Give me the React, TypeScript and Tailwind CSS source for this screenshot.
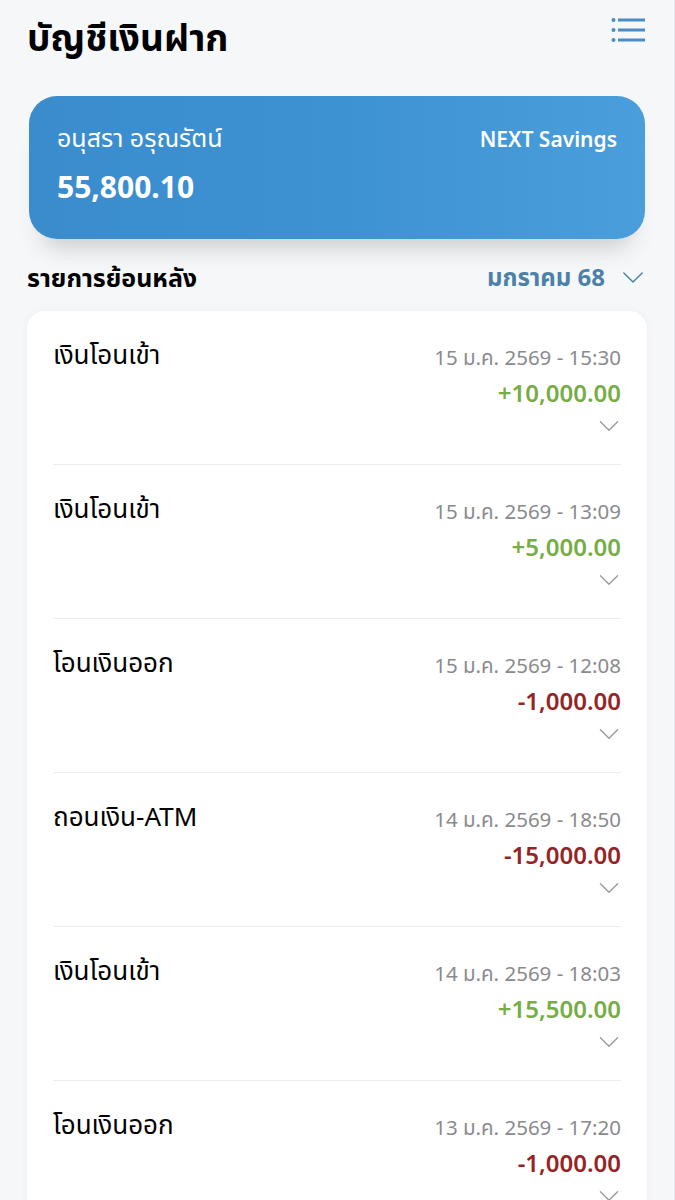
import React from "react";

const rows = [
  { t: "เงินโอนเข้า", d: "15 ม.ค. 2569 - 15:30", a: "+10,000.00", pos: true },
  { t: "เงินโอนเข้า", d: "15 ม.ค. 2569 - 13:09", a: "+5,000.00", pos: true },
  { t: "โอนเงินออก", d: "15 ม.ค. 2569 - 12:08", a: "-1,000.00", pos: false },
  { t: "ถอนเงิน-ATM", d: "14 ม.ค. 2569 - 18:50", a: "-15,000.00", pos: false },
  { t: "เงินโอนเข้า", d: "14 ม.ค. 2569 - 18:03", a: "+15,500.00", pos: true },
  { t: "โอนเงินออก", d: "13 ม.ค. 2569 - 17:20", a: "-1,000.00", pos: false },
];

const Chevron = ({ className }: { className?: string }) => (
  <svg viewBox="0 0 24 14" className={className} fill="none" stroke="currentColor" strokeWidth="1.6" strokeLinecap="round" strokeLinejoin="round">
    <path d="M2 2 L12 12 L22 2" />
  </svg>
);

export default function App() {
  return (
    <div
      className="w-[675px] h-[1200px] overflow-hidden bg-[#f6f7f9] border-r border-[#e4e5e8]"
      style={{ fontFamily: '"Noto Sans", "Noto Sans Thai", "Liberation Sans", sans-serif' }}
    >
      <div className="flex items-start justify-between pl-[27px] pr-[29px] pt-[12px]">
        <h1 className="text-[37px] font-bold text-black leading-[50px]">บัญชีเงินฝาก</h1>
        <svg width="34" height="26" viewBox="0 0 34 26" className="mt-[5px]">
          <circle cx="2.5" cy="3" r="2" fill="#4a8cc6" />
          <circle cx="2.5" cy="13" r="2" fill="#4a8cc6" />
          <circle cx="2.5" cy="23" r="2" fill="#4a8cc6" />
          <rect x="7" y="1.5" width="27" height="3" fill="#4a8cc6" />
          <rect x="7" y="11.5" width="27" height="3" fill="#4a8cc6" />
          <rect x="7" y="21.5" width="27" height="3" fill="#4a8cc6" />
        </svg>
      </div>

      <div className="mx-[29px] mt-[34px] h-[143px] rounded-[28px] bg-gradient-to-r from-[#3a8ccd] via-[#3d92d2] to-[#4a9edb] shadow-[0_22px_24px_-14px_rgba(0,0,0,0.18)] px-[28px] pt-[24px] flex justify-between">
        <div className="text-white">
          <div className="text-[25px] leading-[34px]">อนุสรา อรุณรัตน์</div>
          <div className="text-[30px] font-bold leading-[42px] mt-[12px]">55,800.10</div>
        </div>
        <div className="text-white text-[21px] font-semibold leading-[32px] mt-[3px]">NEXT Savings</div>
      </div>

      <div className="flex items-center justify-between pl-[27px] pr-[30px] mt-[20px]">
        <div className="text-[25px] font-bold text-black leading-[36px]">รายการย้อนหลัง</div>
        <div className="flex items-center gap-[17px]">
          <span className="text-[24px] font-bold text-[#4b81a8] leading-[36px]">มกราคม 68</span>
          <Chevron className="w-[22px] h-[13px] text-[#4b81a8]" />
        </div>
      </div>

      <div className="mx-[27px] mt-[16px] bg-white rounded-[18px] shadow-[0_0_10px_rgba(0,0,0,0.04)] px-[26px]">
        {rows.map((r, i) => (
          <div key={i} className="flex justify-between pt-[25px] h-[154px] border-b border-[#ececee]">
            <div className="text-[26px] text-black leading-[36px]">{r.t}</div>
            <div className="flex flex-col items-end">
              <div className="text-[20.5px] text-[#8a8a8e] leading-[34px] mt-[4px]">{r.d}</div>
              <div className={`text-[24px] font-semibold leading-[34px] mt-[2px] ${r.pos ? "text-[#76ad45]" : "text-[#962424]"}`}>{r.a}</div>
              <Chevron className="w-[22px] h-[12px] text-[#9a9a9e] mt-[10px] mr-[1px]" />
            </div>
          </div>
        ))}
      </div>
    </div>
  );
}
